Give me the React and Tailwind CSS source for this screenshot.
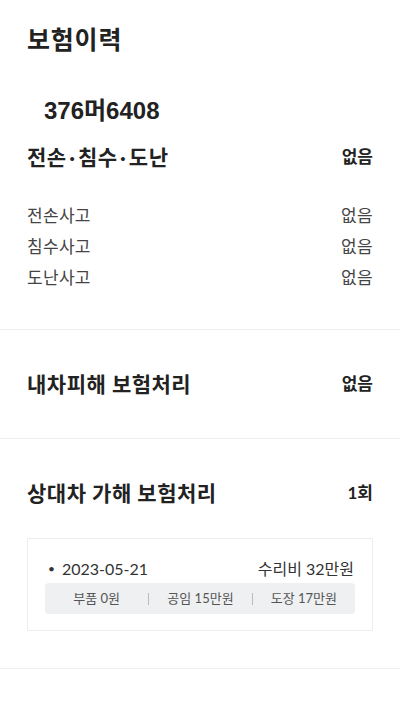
const KR = { fontFamily: 'Lato, "Noto Sans CJK KR", sans-serif' }

function Header({ title, value }) {
  return (
    <div className="flex items-center justify-between">
      <h2 className="text-[21px] font-bold leading-[28px] tracking-[0.5px] text-[#222]">{title}</h2>
      <span className="text-[17px] font-bold leading-[28px] text-[#222]">{value}</span>
    </div>
  )
}

function Row({ label, value }) {
  return (
    <div className="flex items-center justify-between text-[17px] leading-[31px] tracking-[0.3px] text-[#444]">
      <span>{label}</span>
      <span>{value}</span>
    </div>
  )
}

const Dot = () => <span className="mx-[2.5px]">·</span>

export default function App() {
  const costs = ['부품 0원', '공임 15만원', '도장 17만원']

  return (
    <div className="min-h-[712px] w-full bg-white" style={KR}>
      {/* 전손 · 침수 · 도난 */}
      <section className="border-b border-[#ebedf0] px-[27px] pb-[36px] pt-[23px]">
        <h1 className="text-[25px] font-bold leading-[32px] tracking-[0.8px] text-[#222]">보험이력</h1>
        <div
          className="mt-[41px] pl-[17px] text-[24px] font-bold leading-[30px] text-[#222]"
          style={{ fontFamily: '"Liberation Sans", "Noto Sans CJK KR", sans-serif' }}
        >
          376머6408
        </div>
        <div className="mt-[17px]">
          <Header title={<>전손<Dot />침수<Dot />도난</>} value="없음" />
        </div>
        <div className="mt-[29px]">
          <Row label="전손사고" value="없음" />
          <Row label="침수사고" value="없음" />
          <Row label="도난사고" value="없음" />
        </div>
      </section>

      {/* 내차피해 */}
      <section className="border-b border-[#ebedf0] px-[27px] py-[40px]">
        <Header title="내차피해 보험처리" value="없음" />
      </section>

      {/* 상대차 가해 */}
      <section className="border-b border-[#ebedf0] px-[27px] pb-[37px] pt-[40px]">
        <Header title="상대차 가해 보험처리" value="1회" />
        <div className="mt-[31px] border border-[#ebedf0] px-[17px] pb-[16px] pt-[18px]">
          <div className="flex items-center justify-between text-[16px] leading-[24px] text-[#333]">
            <span className="flex items-center">
              <span className="ml-[3px] mr-[7px] text-[12px]">•</span>
              2023-05-21
            </span>
            <span className="mr-[1px]">수리비 32만원</span>
          </div>
          <div className="mt-[2px] flex h-[31px] items-center rounded-[4px] bg-[#eef0f2] text-[13px] text-[#555]">
            {costs.map((c, i) => (
              <div key={c} className="flex flex-1 items-center">
                {i > 0 && <span className="h-[12px] w-px bg-[#b8bcc2]" />}
                <span className="flex-1 text-center">{c}</span>
              </div>
            ))}
          </div>
        </div>
      </section>
    </div>
  )
}
